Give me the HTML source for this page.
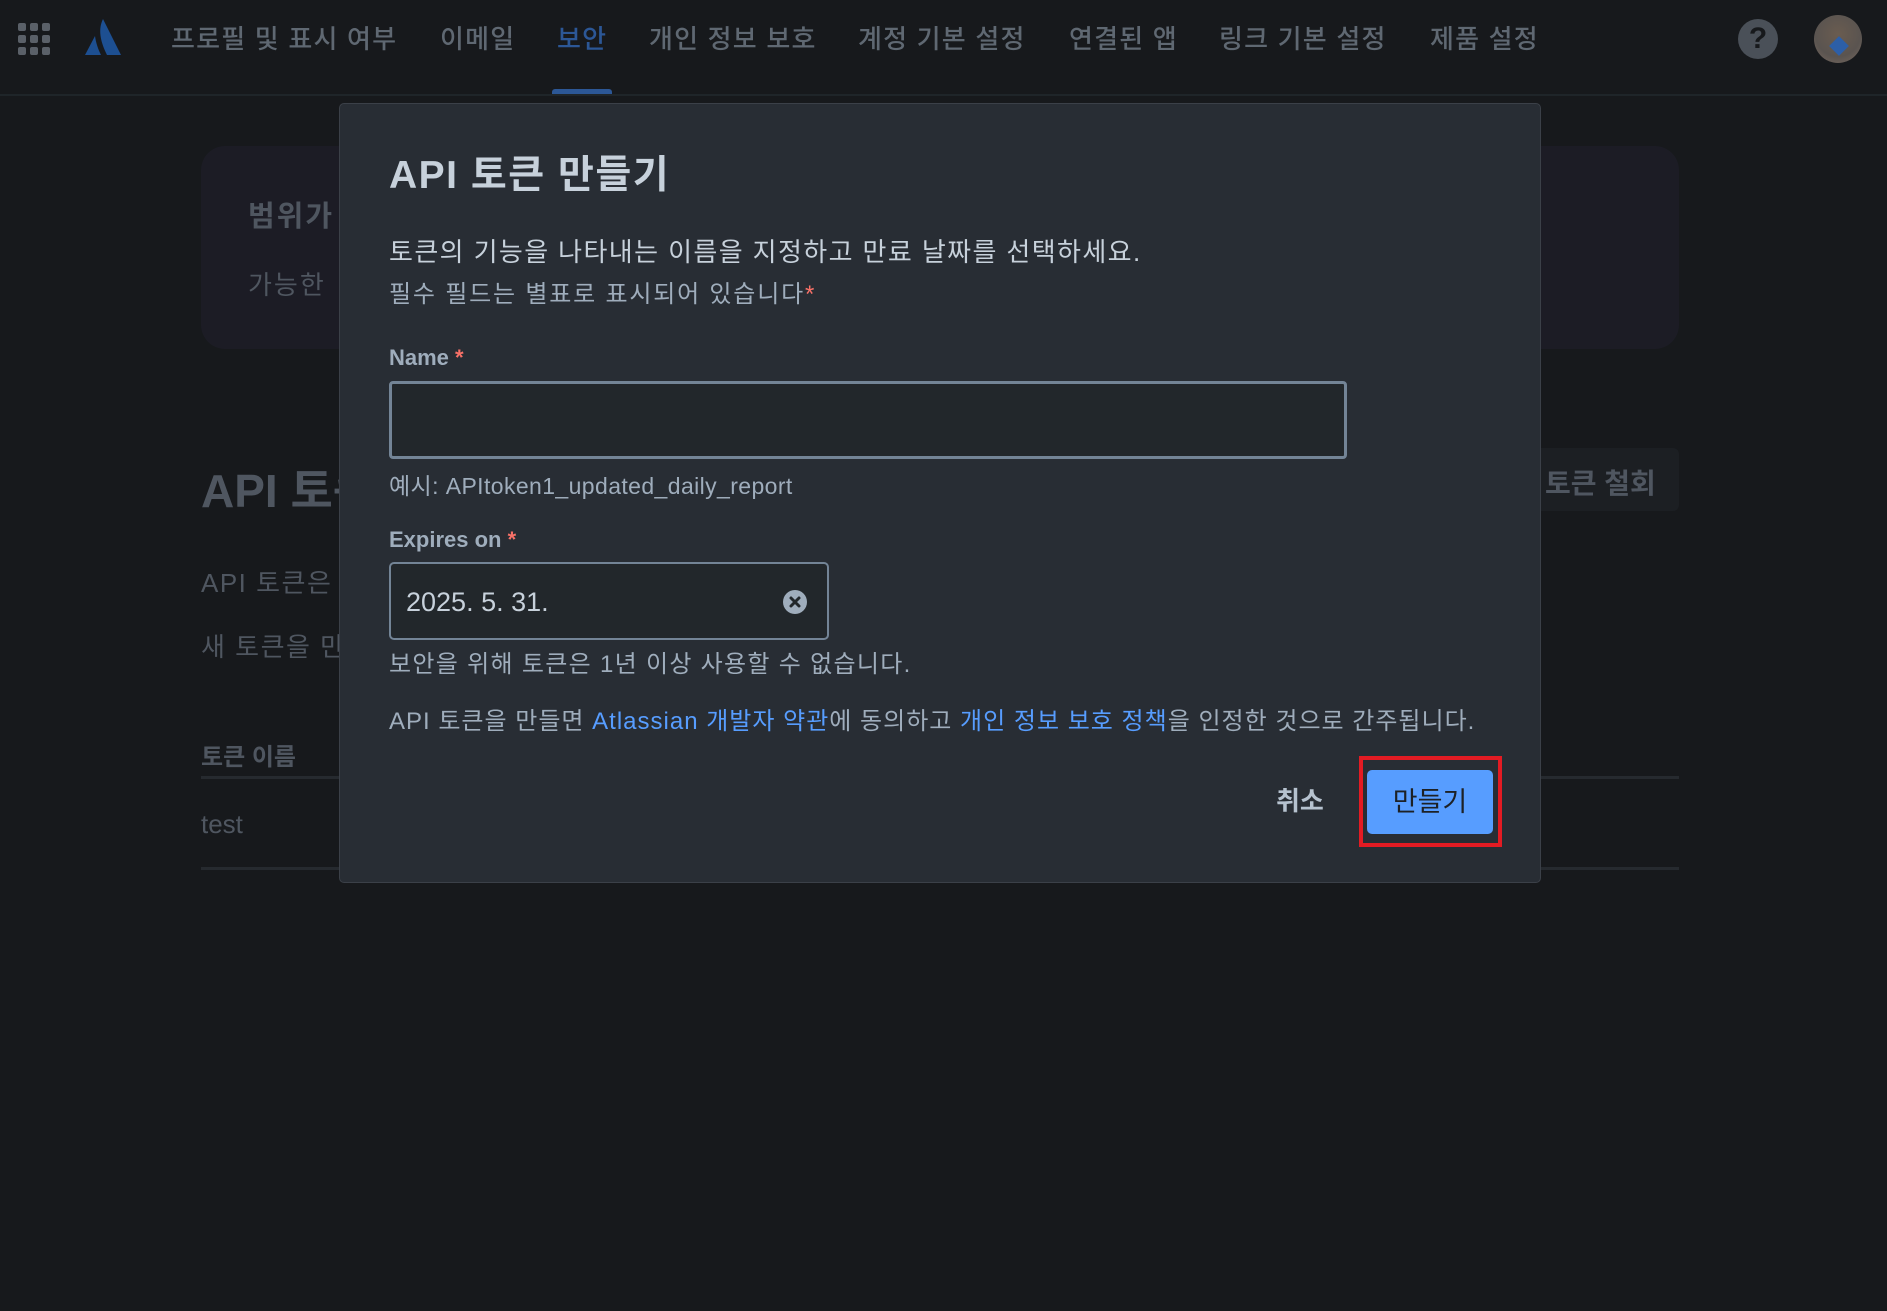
<!DOCTYPE html>
<html><head><meta charset="utf-8"><style>
*{margin:0;padding:0;box-sizing:border-box}
body{width:1887px;height:1311px;background:#17191c;position:relative;overflow:hidden;font-family:"Liberation Sans","Noto Sans CJK KR",sans-serif}
.a{position:absolute;white-space:nowrap}
.nav{font-size:26px;color:#5f6872;font-weight:500;top:22px;line-height:34px;letter-spacing:1.2px}
.dot{position:absolute;width:8px;height:8px;border-radius:2px;background:#5a6068}
.bgt{color:#4f5660}
.m{position:absolute;left:339px;top:103px;width:1202px;height:780px;background:#282d34;border:1px solid #3b4048;border-radius:5px}
.mt{color:#c7d1db}
.st{color:#9fadbc}
.req{color:#f87168}
</style></head><body>
<div class="dot" style="left:18px;top:23px"></div><div class="dot" style="left:30px;top:23px"></div><div class="dot" style="left:42px;top:23px"></div>
<div class="dot" style="left:18px;top:35px"></div><div class="dot" style="left:30px;top:35px"></div><div class="dot" style="left:42px;top:35px"></div>
<div class="dot" style="left:18px;top:47px"></div><div class="dot" style="left:30px;top:47px"></div><div class="dot" style="left:42px;top:47px"></div>
<svg class="a" style="left:84px;top:19px" width="38" height="37" viewBox="0 0 38 37"><path d="M19 0 L37 36 L23 36 C16 22 14 10 19 0Z" fill="#1d4f91"/><path d="M11 17 L1 36 L17 36 C14 30 12 24 11 17Z" fill="#1d4f91"/></svg>
<div class="a nav" style="left:171px">프로필 및 표시 여부</div>
<div class="a nav" style="left:440px">이메일</div>
<div class="a nav" style="left:557px;color:#2c5796">보안</div>
<div class="a nav" style="left:649px">개인 정보 보호</div>
<div class="a nav" style="left:858px">계정 기본 설정</div>
<div class="a nav" style="left:1069px">연결된 앱</div>
<div class="a nav" style="left:1219px">링크 기본 설정</div>
<div class="a nav" style="left:1430px">제품 설정</div>
<div class="a" style="left:552px;top:89px;width:60px;height:6px;background:#2c5796;border-radius:3px 3px 0 0"></div>
<div class="a" style="left:0;top:94px;width:1887px;height:2px;background:#1f2529"></div>
<div class="a" style="left:1738px;top:19px;width:40px;height:40px;border-radius:50%;background:#4a5058;color:#17191c;font-weight:bold;font-size:30px;text-align:center;line-height:40px">?</div>
<div class="a" style="left:1814px;top:15px;width:48px;height:48px;border-radius:50%;background:radial-gradient(circle at 50% 40%,#6a5c50,#5a5450 60%,#7a6a60);overflow:hidden"><div style="position:absolute;left:18px;top:24px;width:14px;height:14px;background:#2d5fa8;transform:rotate(45deg)"></div></div>
<div class="a" style="left:201px;top:146px;width:1478px;height:203px;background:#1c1c25;border-radius:24px"></div>
<div class="a bgt" style="left:248px;top:193px;font-size:29px;font-weight:bold;letter-spacing:2px">범위가</div>
<div class="a bgt" style="left:248px;top:265px;font-size:26px;letter-spacing:2px">가능한 </div>
<div class="a bgt" style="left:201px;top:455px;font-size:46px;font-weight:bold">API 토큰</div>
<div class="a" style="left:1520px;top:448px;width:159px;height:63px;background:#1c1f23;border-radius:6px"></div>
<div class="a bgt" style="left:1545px;top:462px;font-size:28px;font-weight:bold">토큰 철회</div>
<div class="a bgt" style="left:201px;top:563px;font-size:26px;letter-spacing:1.5px">API 토큰은 </div>
<div class="a bgt" style="left:201px;top:627px;font-size:26px;letter-spacing:1.5px">새 토큰을 만</div>
<div class="a bgt" style="left:201px;top:737px;font-size:24px;font-weight:bold">토큰 이름</div>
<div class="a" style="left:201px;top:776px;width:1478px;height:3px;background:#262a2f"></div>
<div class="a bgt" style="left:201px;top:809px;font-size:26px">test</div>
<div class="a" style="left:201px;top:867px;width:1478px;height:3px;background:#262a2f"></div>
<div class="m"></div>
<div class="a mt" style="left:389px;top:153px;font-size:39px;font-weight:bold;line-height:46px;letter-spacing:1.5px">API 토큰 만들기</div>
<div class="a mt" style="left:389px;top:236px;font-size:26px;line-height:32px;letter-spacing:1.4px">토큰의 기능을 나타내는 이름을 지정하고 만료 날짜를 선택하세요.</div>
<div class="a st" style="left:389px;top:281px;font-size:24px;line-height:28px;letter-spacing:1.8px">필수 필드는 별표로 표시되어 있습니다<span class="req">*</span></div>
<div class="a st" style="left:389px;top:344px;font-size:22px;line-height:28px;font-weight:bold">Name <span class="req">*</span></div>
<div class="a" style="left:389px;top:381px;width:958px;height:78px;border:3px solid #738496;border-radius:4px;background:#22272b"></div>
<div class="a st" style="left:389px;top:472px;font-size:23px;line-height:28px;letter-spacing:0.4px">예시: APItoken1_updated_daily_report</div>
<div class="a st" style="left:389px;top:526px;font-size:22px;line-height:28px;font-weight:bold">Expires on <span class="req">*</span></div>
<div class="a" style="left:389px;top:562px;width:440px;height:78px;border:2px solid #738496;border-radius:5px;background:#22272b"></div>
<div class="a mt" style="left:406px;top:586px;font-size:27px;line-height:32px">2025. 5. 31.</div>
<svg class="a" style="left:783px;top:590px" width="24" height="24" viewBox="0 0 24 24"><circle cx="12" cy="12" r="12" fill="#9fadbc"/><path d="M8 8L16 16M16 8L8 16" stroke="#22272b" stroke-width="3" stroke-linecap="round"/></svg>
<div class="a st" style="left:389px;top:651px;font-size:24px;line-height:28px;letter-spacing:1.3px">보안을 위해 토큰은 1년 이상 사용할 수 없습니다.</div>
<div class="a st" style="left:389px;top:708px;font-size:24px;line-height:28px;letter-spacing:1.0px">API 토큰을 만들면 <span style="color:#579dff">Atlassian 개발자 약관</span>에 동의하고 <span style="color:#579dff">개인 정보 보호 정책</span>을 인정한 것으로 간주됩니다.</div>
<div class="a" style="left:1276px;top:786px;font-size:26px;line-height:30px;font-weight:bold;color:#b6c2cf">취소</div>
<div class="a" style="left:1359px;top:756px;width:143px;height:91px;border:4px solid #e31b23"></div>
<div class="a" style="left:1367px;top:770px;width:126px;height:64px;background:#579dff;border-radius:5px;color:#1d2125;font-size:27px;line-height:64px;text-align:center">만들기</div>
</body></html>
